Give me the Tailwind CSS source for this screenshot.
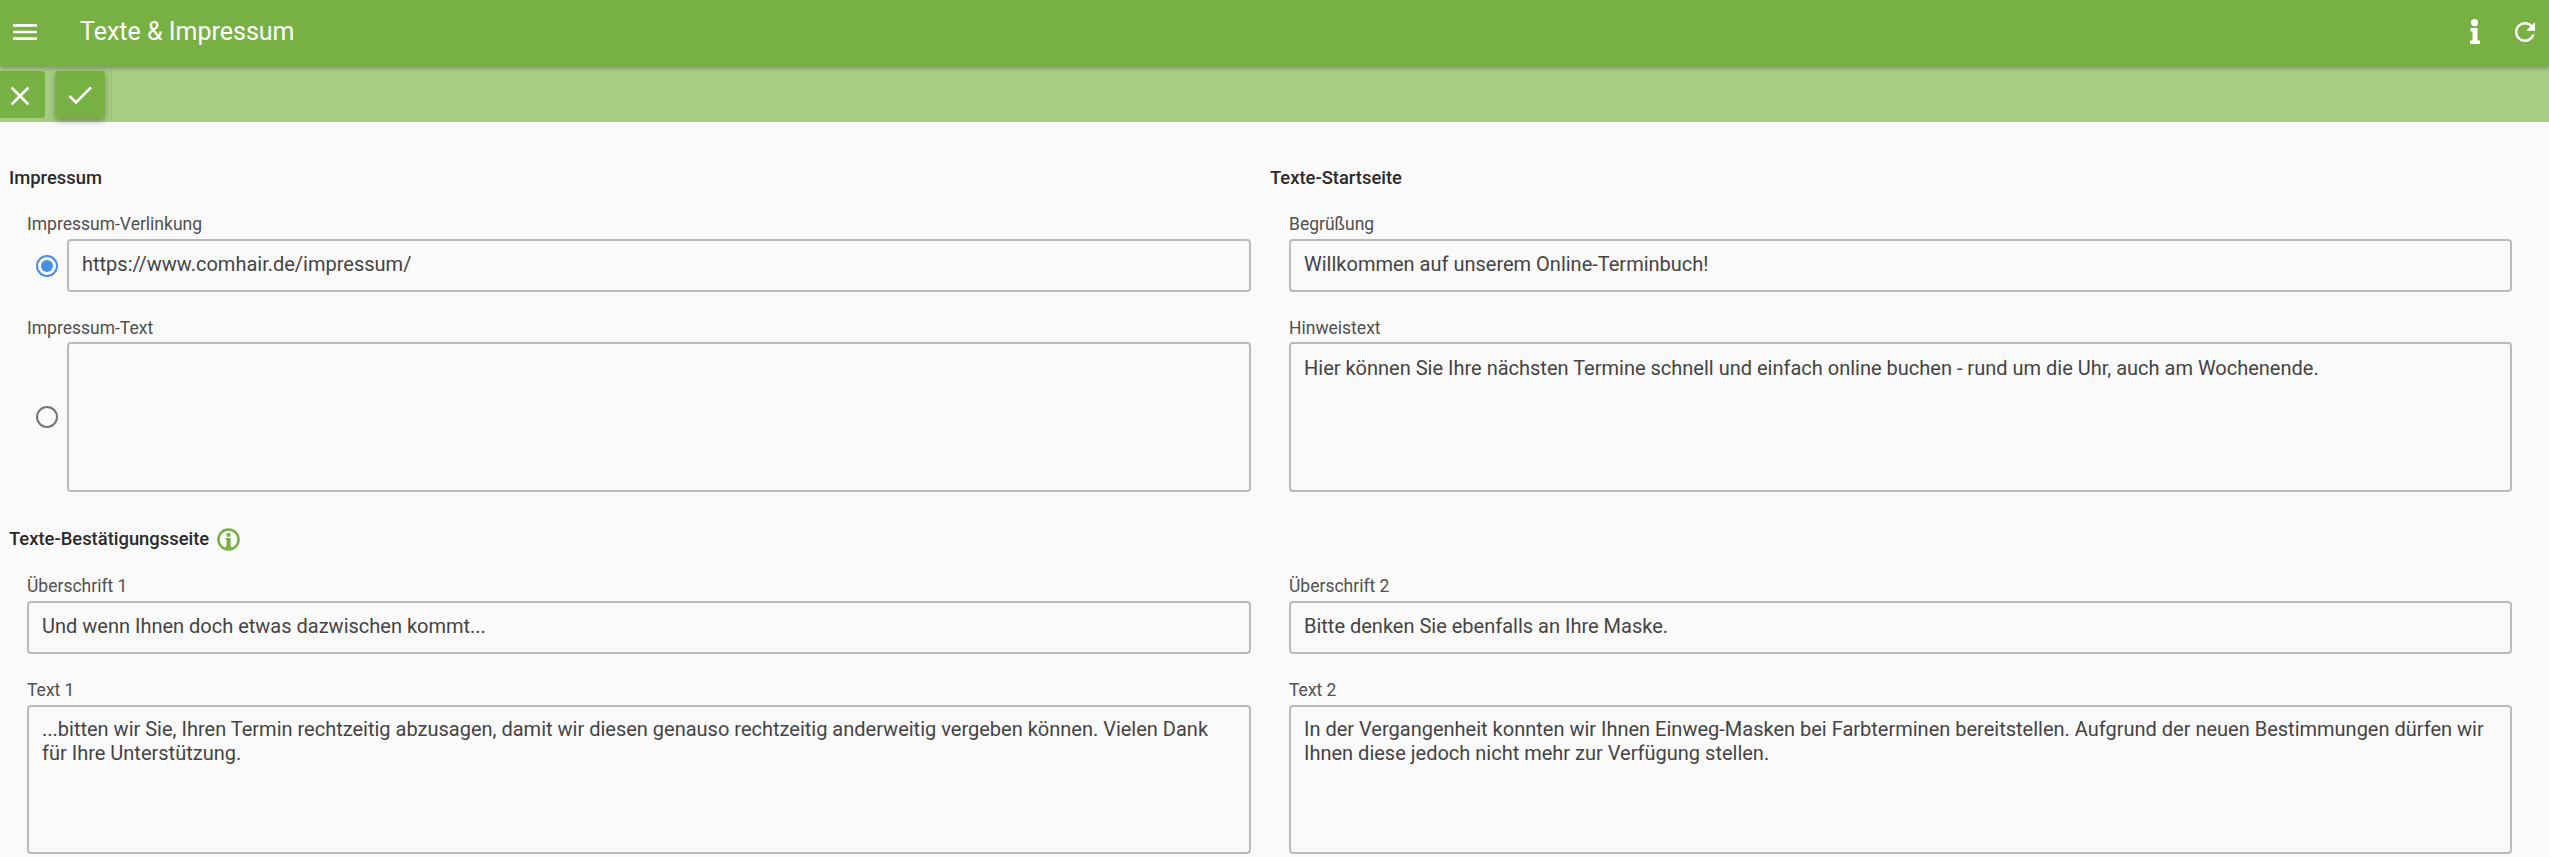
<!DOCTYPE html>
<html lang="de">
  <head>
    <meta charset="UTF-8">
    <title>Texte &amp; Impressum</title>
    <script src="https://cdn.jsdelivr.net/npm/@tailwindcss/browser@4"></script>
  </head>
  <body class="h-[857px] overflow-hidden bg-[#fafafa] font-['Roboto',sans-serif] text-[#2a2a2a]">
    <!-- toolbar -->
    <header class="relative z-10 flex h-[66px] items-center bg-[#78b143] pb-[3px] text-white shadow-[0_2px_5px_rgba(0,0,0,0.3)]">
      <button type="button" class="ml-[9px] size-8">
        <svg class="size-8" viewBox="0 0 24 24" fill="currentColor" aria-hidden="true"><path d="M3 18h18v-2H3v2zm0-5h18v-2H3v2zm0-7v2h18V6H3z"/></svg>
      </button>
      <h1 class="ml-[39px] text-[25px]">Texte &amp; Impressum</h1>
      <div class="ml-auto flex items-center">
        <svg class="h-[25px] w-[10px]" viewBox="0 0 10 25" fill="currentColor" aria-hidden="true"><circle cx="4.5" cy="3.6" r="3.6"/><path d="M.5 9h7v12.5H10V25H0v-3.5h2.5v-9h-2z"/></svg>
        <svg class="ml-[30px] mr-[9px] size-[30px]" viewBox="0 0 24 24" fill="currentColor" aria-hidden="true"><path d="M17.65 6.35C16.2 4.9 14.21 4 12 4c-4.42 0-7.99 3.58-7.99 8s3.57 8 7.99 8c3.73 0 6.84-2.55 7.73-6h-2.08c-.82 2.33-3.04 4-5.65 4-3.31 0-6-2.69-6-6s2.69-6 6-6c1.66 0 3.14.69 4.22 1.78L13 11h7V4l-2.35 2.35z"/></svg>
      </div>
    </header>

    <!-- action bar -->
    <div class="flex h-[56px] items-center bg-[#a7cd83]">
      <div class="flex h-full w-[112px] items-center gap-[10px] border-r border-black/5">
        <button type="button" class="flex h-[47px] w-[45px] items-center justify-center rounded-r-[4px] bg-[#78b143] pr-[5px] pt-[3px] text-white">
          <svg class="size-8" viewBox="0 0 24 24" fill="currentColor" aria-hidden="true"><path d="M19 6.41 17.59 5 12 10.59 6.41 5 5 6.41 10.59 12 5 17.59 6.41 19 12 13.41 17.59 19 19 17.59 13.41 12z"/></svg>
        </button>
        <button type="button" class="flex h-[47px] w-[50px] items-center justify-center rounded-[4px] bg-[#78b143] pt-[2px] text-white shadow-[0_3px_6px_rgba(0,0,0,0.3)]">
          <svg class="size-8" viewBox="0 0 24 24" fill="currentColor" aria-hidden="true"><path d="M9 16.17 4.83 12l-1.42 1.41L9 19 21 7l-1.41-1.41z"/></svg>
        </button>
      </div>
    </div>

    <main class="grid grid-cols-2 pl-[9px] pr-[18px] pt-[45px]">
      <section>
        <h2 class="h-[22px] text-[18.4px] leading-[22px] font-medium">Impressum</h2>
        <div class="mt-[22px] pl-[18px] pr-[19px]">
          <label class="block h-[24px] text-[17.5px] leading-[26px] text-[#505050]">Impressum-Verlinkung</label>
          <div class="mt-[4px] flex items-center gap-[9px] pl-[9px]">
            <span class="flex size-[22px] shrink-0 items-center justify-center rounded-full border-2 border-[#4a8fe3]"><span class="size-[12px] rounded-full bg-[#4a8fe3]"></span></span>
            <input class="h-[53px] w-full rounded-[4px] border-2 border-[#bbb] bg-transparent px-[13px] pb-[4px] text-[20px] text-[#444]" value="https://www.comhair.de/impressum/">
          </div>
          <label class="mt-[23px] block h-[24px] text-[17.5px] leading-[26px] text-[#505050]">Impressum-Text</label>
          <div class="mt-[3px] flex items-center gap-[9px] pl-[9px]">
            <span class="size-[22px] shrink-0 rounded-full border-2 border-[#757575]"></span>
            <textarea class="block h-[150px] w-full resize-none rounded-[4px] border-2 border-[#bbb] bg-transparent px-[13px] py-[12px] text-[20px] leading-6 text-[#444]"></textarea>
          </div>
        </div>
      </section>
      <section>
        <h2 class="h-[22px] text-[18.4px] leading-[22px] font-medium">Texte-Startseite</h2>
        <div class="mt-[22px] pl-[19px] pr-[19px]">
          <label class="block h-[24px] text-[17.5px] leading-[26px] text-[#505050]">Begrüßung</label>
          <input class="mt-[4px] block h-[53px] w-full rounded-[4px] border-2 border-[#bbb] bg-transparent px-[13px] pb-[4px] text-[20px] text-[#444]" value="Willkommen auf unserem Online-Terminbuch!">
          <label class="mt-[23px] block h-[24px] text-[17.5px] leading-[26px] text-[#505050]">Hinweistext</label>
          <textarea class="mt-[3px] block h-[150px] w-full resize-none rounded-[4px] border-2 border-[#bbb] bg-transparent px-[13px] py-[12px] text-[20px] leading-6 text-[#444]">Hier können Sie Ihre nächsten Termine schnell und einfach online buchen - rund um die Uhr, auch am Wochenende.</textarea>
        </div>
      </section>

      <section class="col-span-2 mt-[36px]">
        <h2 class="flex h-[22px] items-center gap-[8px] text-[18.4px] leading-[22px] font-medium">
          Texte-Bestätigungsseite
          <svg class="size-[23px] text-[#78b143]" viewBox="0 0 24 24" fill="none" aria-hidden="true"><circle cx="12" cy="12" r="10.5" stroke="currentColor" stroke-width="2.6"/><circle cx="12" cy="7.2" r="2.2" fill="currentColor"/><path d="M9.2 10.4h5v8.4l1.8 2.4H8l2-2.4v-6.2h-.8z" fill="currentColor"/></svg>
        </h2>
      </section>
      <section>
        <div class="mt-[23px] pl-[18px] pr-[19px]">
          <label class="block h-[24px] text-[17.5px] leading-[26px] text-[#505050]">Überschrift 1</label>
          <input class="mt-[4px] block h-[53px] w-full rounded-[4px] border-2 border-[#bbb] bg-transparent px-[13px] pb-[4px] text-[20px] text-[#444]" value="Und wenn Ihnen doch etwas dazwischen kommt...">
          <label class="mt-[23px] block h-[24px] text-[17.5px] leading-[26px] text-[#505050]">Text 1</label>
          <textarea class="mt-[4px] block h-[149px] w-full resize-none rounded-[4px] border-2 border-[#bbb] bg-transparent px-[13px] py-[10px] text-[20px] leading-6 text-[#444]">...bitten wir Sie, Ihren Termin rechtzeitig abzusagen, damit wir diesen genauso rechtzeitig anderweitig vergeben können. Vielen Dank für Ihre Unterstützung.</textarea>
        </div>
      </section>
      <section>
        <div class="mt-[23px] pl-[19px] pr-[19px]">
          <label class="block h-[24px] text-[17.5px] leading-[26px] text-[#505050]">Überschrift 2</label>
          <input class="mt-[4px] block h-[53px] w-full rounded-[4px] border-2 border-[#bbb] bg-transparent px-[13px] pb-[4px] text-[20px] text-[#444]" value="Bitte denken Sie ebenfalls an Ihre Maske.">
          <label class="mt-[23px] block h-[24px] text-[17.5px] leading-[26px] text-[#505050]">Text 2</label>
          <textarea class="mt-[4px] block h-[149px] w-full resize-none rounded-[4px] border-2 border-[#bbb] bg-transparent px-[13px] py-[10px] text-[20px] leading-6 text-[#444]">In der Vergangenheit konnten wir Ihnen Einweg-Masken bei Farbterminen bereitstellen. Aufgrund der neuen Bestimmungen dürfen wir Ihnen diese jedoch nicht mehr zur Verfügung stellen.</textarea>
        </div>
      </section>
    </main>
  </body>
</html>
